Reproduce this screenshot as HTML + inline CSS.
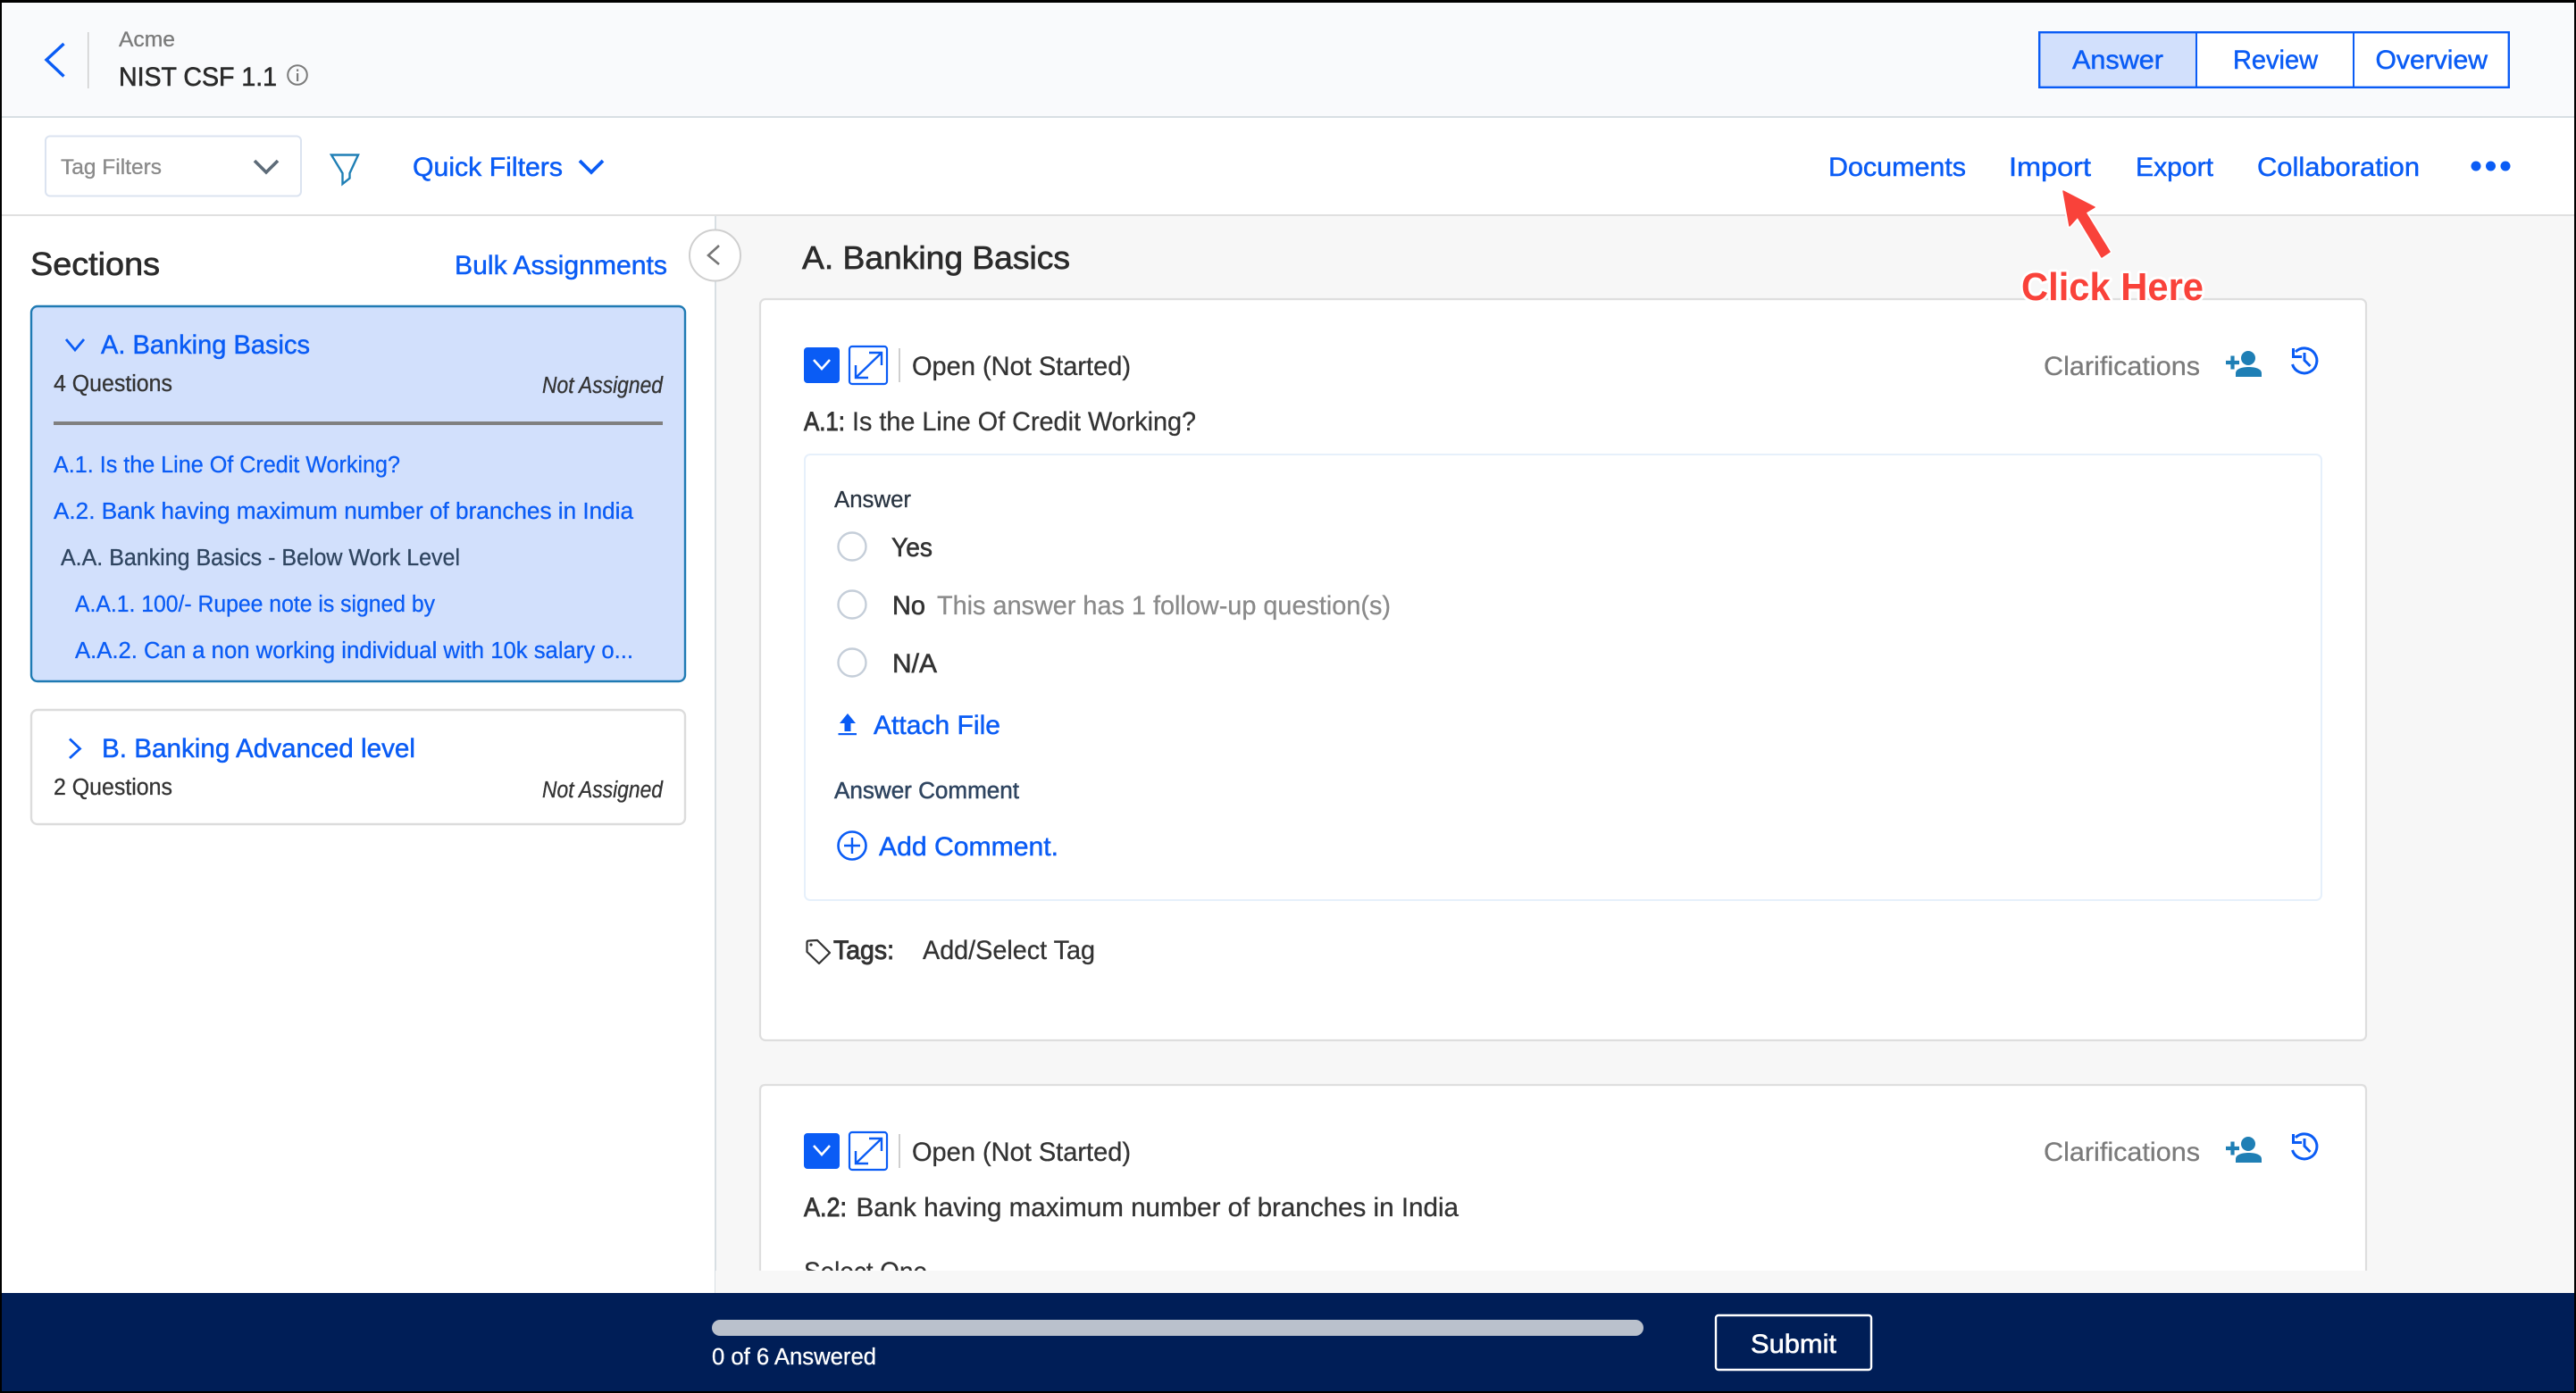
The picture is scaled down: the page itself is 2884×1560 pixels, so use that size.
<!DOCTYPE html>
<html>
<head>
<meta charset="utf-8">
<title>NIST CSF 1.1</title>
<style>
html,body{margin:0;padding:0;background:#000;}
svg{display:block;}
text{font-family:"Liberation Sans",sans-serif;font-size:30px;fill:var(--c,#333);stroke:var(--c,#333);stroke-width:.3px;white-space:pre;}
.s{font-size:25.5px;}
.b{--c:#0a5cf5;stroke-width:.5px;}
.l{--c:#0a5cf5;}
.g{--c:#7b7b7b;}
.m{stroke-width:.9px;}
</style>
</head>
<body>
<svg xmlns="http://www.w3.org/2000/svg" width="2884" height="1560" viewBox="0 0 2884 1560">
<defs>
<g id="rowicons">
  <rect x="900" y="389" width="40" height="40" rx="4" fill="#0a5cf5"/>
  <path d="M911 403 L920 413 L929 403" fill="none" stroke="#fff" stroke-width="2.6"/>
  <rect x="951" y="388" width="42" height="42" rx="3" fill="#fff" stroke="#0a5cf5" stroke-width="2.2"/>
  <path d="M958 423 L987 395 M973 395 H987 V409 M958 409 V423 H972" fill="none" stroke="#0a5cf5" stroke-width="2.4"/>
  <rect x="1006" y="390" width="2" height="38" fill="#cfcfcf"/>
  <path d="M2492 406 H2507 M2499.5 398.5 V413.5" stroke="#1f7fb5" stroke-width="4.2" fill="none"/>
  <circle cx="2517" cy="401" r="8" fill="#1f7fb5"/>
  <path d="M2503 422 V418 C2503 413 2510 411 2517.5 411 C2525 411 2532 413 2532 418 V422 Z" fill="#1f7fb5"/>
  <path d="M2566.5 408 A14 14 0 1 0 2570 394" fill="none" stroke="#0a5cf5" stroke-width="3"/>
  <path d="M2567.5 390 V399.5 H2577" fill="none" stroke="#0a5cf5" stroke-width="3"/>
  <path d="M2580 395 V403.5 L2586.5 410" fill="none" stroke="#0a5cf5" stroke-width="3"/>
</g>
</defs>

<!-- frame -->
<rect width="2884" height="1560" fill="#000"/>
<rect x="2" y="3" width="2880" height="1555" fill="#fff"/>

<!-- header -->
<rect x="2" y="3" width="2880" height="127" fill="#f9fafc"/>
<rect x="2" y="130" width="2880" height="2" fill="#d8dfe3"/>
<path d="M71.5 49 L52 67 L71.5 85.5" fill="none" stroke="#0a5cf5" stroke-width="3.4"/>
<rect x="98" y="36" width="1.5" height="63" fill="#cfcfcf"/>
<text x="133" y="52" style="font-size:24px" class="g" textLength="63" lengthAdjust="spacingAndGlyphs">Acme</text>
<text x="133" y="96" style="--c:#2b2b2b;stroke-width:.6px" textLength="177" lengthAdjust="spacingAndGlyphs">NIST CSF 1.1</text>
<circle cx="333" cy="84" r="10.8" fill="none" stroke="#7b7b7b" stroke-width="2"/>
<rect x="332" y="82" width="2.2" height="9" fill="#7b7b7b"/>
<rect x="332" y="77.5" width="2.2" height="2.4" fill="#7b7b7b"/>

<!-- tabs -->
<rect x="2283" y="36" width="176" height="62" fill="#d2e0fc"/>
<rect x="2459" y="36" width="350" height="62" fill="#fff"/>
<rect x="2283.2" y="36.2" width="525.6" height="61.6" fill="none" stroke="#0a5cf5" stroke-width="2.4"/>
<rect x="2458" y="36" width="2" height="62" fill="#0a5cf5"/>
<rect x="2634" y="36" width="2" height="62" fill="#0a5cf5"/>
<text x="2320" y="77" class="b" textLength="102" lengthAdjust="spacingAndGlyphs">Answer</text>
<text x="2500" y="77" class="b" textLength="95" lengthAdjust="spacingAndGlyphs">Review</text>
<text x="2659.5" y="77" class="b" textLength="125.5" lengthAdjust="spacingAndGlyphs">Overview</text>

<!-- toolbar -->
<rect x="2" y="240" width="2880" height="2" fill="#e0e0e0"/>
<rect x="51" y="152.5" width="286" height="67" rx="5" fill="#fff" stroke="#dbe3f0" stroke-width="2"/>
<text x="68" y="195" style="font-size:24px;--c:#8a8a8a" textLength="113" lengthAdjust="spacingAndGlyphs">Tag Filters</text>
<path d="M285 180 L298 193 L311 180" fill="none" stroke="#5d6b78" stroke-width="3.6"/>
<path d="M371 173.5 H401 L391.5 194 V199.5 L383.5 206 V194 Z" fill="none" stroke="#1f7fb5" stroke-width="2.4"/>
<text x="462" y="197" class="b" textLength="168" lengthAdjust="spacingAndGlyphs">Quick Filters</text>
<path d="M649 180 L662 193 L675 180" fill="none" stroke="#0a5cf5" stroke-width="3.8"/>
<text x="2047" y="197" class="b" textLength="154" lengthAdjust="spacingAndGlyphs">Documents</text>
<text x="2249" y="197" class="b" textLength="92" lengthAdjust="spacingAndGlyphs">Import</text>
<text x="2391" y="197" class="b" textLength="87" lengthAdjust="spacingAndGlyphs">Export</text>
<text x="2527" y="197" class="b" textLength="182" lengthAdjust="spacingAndGlyphs">Collaboration</text>
<circle cx="2772" cy="186" r="5.5" fill="#0a5cf5"/>
<circle cx="2788.5" cy="186" r="5.5" fill="#0a5cf5"/>
<circle cx="2805" cy="186" r="5.5" fill="#0a5cf5"/>

<!-- main background -->
<rect x="801" y="242" width="2081" height="1206" fill="#f7f7f7"/>
<rect x="800" y="242" width="2" height="1206" fill="#d8dfe3"/>

<!-- sidebar -->
<text x="34" y="308" style="font-size:36px;--c:#2b2b2b;stroke-width:.7px" textLength="145" lengthAdjust="spacingAndGlyphs">Sections</text>
<text x="509" y="307" class="b" textLength="238" lengthAdjust="spacingAndGlyphs">Bulk Assignments</text>

<rect x="35" y="343" width="732" height="420" rx="7" fill="#d2e0fc" stroke="#1f7ab3" stroke-width="2.4"/>
<path d="M74 380 L84 392 L94 380" fill="none" stroke="#0a5cf5" stroke-width="2.8"/>
<text x="113" y="396" class="b" textLength="234" lengthAdjust="spacingAndGlyphs">A. Banking Basics</text>
<text x="60" y="438" class="s" textLength="133" lengthAdjust="spacingAndGlyphs">4 Questions</text>
<text x="607" y="440" class="s" style="font-style:italic" textLength="135" lengthAdjust="spacingAndGlyphs">Not Assigned</text>
<rect x="60" y="472" width="682" height="4" fill="#808080"/>
<text x="60" y="529" class="s l" textLength="388" lengthAdjust="spacingAndGlyphs">A.1. Is the Line Of Credit Working?</text>
<text x="60" y="581" class="s l" textLength="649" lengthAdjust="spacingAndGlyphs">A.2. Bank having maximum number of branches in India</text>
<text x="68" y="633" class="s" style="--c:#2f4560" textLength="447" lengthAdjust="spacingAndGlyphs">A.A. Banking Basics - Below Work Level</text>
<text x="84" y="685" class="s l" textLength="403" lengthAdjust="spacingAndGlyphs">A.A.1. 100/- Rupee note is signed by</text>
<text x="84" y="737" class="s l" textLength="625" lengthAdjust="spacingAndGlyphs">A.A.2. Can a non working individual with 10k salary o...</text>

<rect x="35" y="795" width="732" height="128" rx="7" fill="#fff" stroke="#dcdcdc" stroke-width="2.4"/>
<path d="M78 827.5 L89.5 838.5 L78 849" fill="none" stroke="#0a5cf5" stroke-width="2.8"/>
<text x="114" y="848" class="b" textLength="351" lengthAdjust="spacingAndGlyphs">B. Banking Advanced level</text>
<text x="60" y="890" class="s" textLength="133" lengthAdjust="spacingAndGlyphs">2 Questions</text>
<text x="607" y="893" class="s" style="font-style:italic" textLength="135" lengthAdjust="spacingAndGlyphs">Not Assigned</text>

<circle cx="800.5" cy="286" r="28.5" fill="#fff" stroke="#cfcfcf" stroke-width="2"/>
<path d="M805 275 L793 286 L805 296" fill="none" stroke="#777" stroke-width="2.6"/>

<!-- main heading -->
<text x="898" y="301" style="font-size:36px;--c:#2b2b2b;stroke-width:.7px" textLength="300" lengthAdjust="spacingAndGlyphs">A. Banking Basics</text>

<!-- card 1 -->
<rect x="851" y="335" width="1798" height="830" rx="6" fill="#fff" stroke="#dedede" stroke-width="2.2"/>
<use href="#rowicons"/>
<text x="1021" y="420" textLength="245" lengthAdjust="spacingAndGlyphs">Open (Not Started)</text>
<text x="2288" y="420" class="g" textLength="175" lengthAdjust="spacingAndGlyphs">Clarifications</text>
<text x="900" y="482" class="m" textLength="46" lengthAdjust="spacingAndGlyphs">A.1:</text>
<text x="954" y="482" textLength="385" lengthAdjust="spacingAndGlyphs">Is the Line Of Credit Working?</text>

<rect x="901" y="509" width="1698" height="499" rx="6" fill="#fff" stroke="#e6f0fb" stroke-width="2"/>
<text x="934" y="568" class="s" style="--c:#2a3542" textLength="86" lengthAdjust="spacingAndGlyphs">Answer</text>
<circle cx="954" cy="612" r="15.5" fill="#fff" stroke="#c5ced9" stroke-width="2.4"/>
<circle cx="954" cy="677" r="15.5" fill="#fff" stroke="#c5ced9" stroke-width="2.4"/>
<circle cx="954" cy="742" r="15.5" fill="#fff" stroke="#c5ced9" stroke-width="2.4"/>
<text x="998" y="623" class="m" style="stroke-width:.6px" textLength="46" lengthAdjust="spacingAndGlyphs">Yes</text>
<text x="999" y="688" class="m" style="stroke-width:.6px" textLength="37" lengthAdjust="spacingAndGlyphs">No</text>
<text x="1049" y="688" style="--c:#8a8a8a" textLength="508" lengthAdjust="spacingAndGlyphs">This answer has 1 follow-up question(s)</text>
<text x="999" y="753" class="m" style="stroke-width:.6px" textLength="50" lengthAdjust="spacingAndGlyphs">N/A</text>
<path d="M949 799 L958 810 H952.5 V819 H945.5 V810 H940 Z" fill="#0a5cf5"/>
<rect x="938.5" y="821" width="20.5" height="2.2" fill="#0a5cf5"/>
<text x="978" y="822" class="b" textLength="142" lengthAdjust="spacingAndGlyphs">Attach File</text>
<text x="934" y="894" class="s" style="--c:#2f4560;stroke-width:.5px" textLength="207" lengthAdjust="spacingAndGlyphs">Answer Comment</text>
<circle cx="954" cy="947" r="15.5" fill="none" stroke="#0a5cf5" stroke-width="2.6"/>
<path d="M945 947 H963 M954 938 V956" fill="none" stroke="#0a5cf5" stroke-width="2.4"/>
<text x="984" y="958" class="b" textLength="201" lengthAdjust="spacingAndGlyphs">Add Comment.</text>

<path d="M903.5 1055.5 Q903.5 1053.5 905.5 1053.5 L915 1053 L929 1067 L917 1079 L903.5 1066 Z" fill="none" stroke="#333" stroke-width="2.2" stroke-linejoin="round"/>
<circle cx="908" cy="1058" r="1.6" fill="#333"/>
<text x="933" y="1074" class="m" textLength="68" lengthAdjust="spacingAndGlyphs">Tags:</text>
<text x="1033" y="1074" textLength="193" lengthAdjust="spacingAndGlyphs">Add/Select Tag</text>

<!-- card 2 -->
<path d="M851 1423 V1221 Q851 1215 857 1215 H2643 Q2649 1215 2649 1221 V1423" fill="#fff" stroke="#dedede" stroke-width="2.2"/>
<use href="#rowicons" y="880"/>
<text x="1021" y="1300" textLength="245" lengthAdjust="spacingAndGlyphs">Open (Not Started)</text>
<text x="2288" y="1300" class="g" textLength="175" lengthAdjust="spacingAndGlyphs">Clarifications</text>
<text x="900" y="1362" class="m" textLength="48" lengthAdjust="spacingAndGlyphs">A.2:</text>
<text x="958.5" y="1362" textLength="674.5" lengthAdjust="spacingAndGlyphs">Bank having maximum number of branches in India</text>
<text x="900" y="1434" textLength="138" lengthAdjust="spacingAndGlyphs">Select One</text>
<rect x="801" y="1423" width="2081" height="25" fill="#f7f7f7"/>

<!-- bottom bar -->
<rect x="2" y="1448" width="2880" height="110" fill="#001e57"/>
<rect x="797" y="1478" width="1043" height="18" rx="9" fill="#bac1cc"/>
<text x="797" y="1528" class="s" style="--c:#fff" textLength="184" lengthAdjust="spacingAndGlyphs">0 of 6 Answered</text>
<rect x="1921" y="1473" width="174" height="61" rx="3" fill="none" stroke="#fff" stroke-width="2.4"/>
<text x="1960" y="1515" style="--c:#fff;stroke-width:.6px" textLength="96" lengthAdjust="spacingAndGlyphs">Submit</text>

<!-- annotation -->
<path d="M2310 214 L2345 232 L2335 238 L2362 282 L2353 288 L2326 243 L2317 253 Z" fill="#fff" stroke="#fff" stroke-width="5" stroke-linejoin="round"/>
<path d="M2310 214 L2345 232 L2335 238 L2362 282 L2353 288 L2326 243 L2317 253 Z" fill="#f9423a" stroke="#f9423a" stroke-width="1.5" stroke-linejoin="round"/>
<text x="2263" y="336" style="font-size:44px;font-weight:bold;--c:#f9423a;stroke:#fff;stroke-width:6px;paint-order:stroke;stroke-linejoin:round" textLength="204" lengthAdjust="spacingAndGlyphs">Click Here</text>
</svg>
</body>
</html>
